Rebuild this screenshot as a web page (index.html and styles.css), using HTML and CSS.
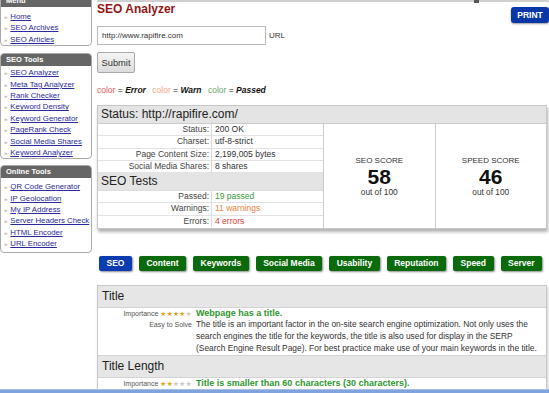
FILE: index.html
```html
<!DOCTYPE html>
<html lang="en">
<head>
    <meta charset="UTF-8">
    <meta name="viewport" content="width=device-width, initial-scale=1.0">
    <title>SEO Analyzer</title>
    <link rel="stylesheet" href="styles.css">
</head>

<body>
    <div class="page">
        <!-- levý panel s menu -->
        <aside class="sidebar">
            <div class="box box-menu">
                <div class="box-head">Menu</div>
                <ul>
                    <li><a href="#">Home</a></li>
                    <li><a href="#">SEO Archives</a></li>
                    <li><a href="#">SEO Articles</a></li>
                </ul>
            </div>
            <div class="box">
                <div class="box-head">SEO Tools</div>
                <ul>
                    <li><a href="#">SEO Analyzer</a></li>
                    <li><a href="#">Meta Tag Analyzer</a></li>
                    <li><a href="#">Rank Checker</a></li>
                    <li><a href="#">Keyword Density</a></li>
                    <li><a href="#">Keyword Generator</a></li>
                    <li><a href="#">PageRank Check</a></li>
                    <li><a href="#">Social Media Shares</a></li>
                    <li><a href="#">Keyword Analyzer</a></li>
                </ul>
            </div>
            <div class="box box-last">
                <div class="box-head">Online Tools</div>
                <ul>
                    <li><a href="#">QR Code Generator</a></li>
                    <li><a href="#">IP Geolocation</a></li>
                    <li><a href="#">My IP Address</a></li>
                    <li><a href="#">Server Headers Check</a></li>
                    <li><a href="#">HTML Encoder</a></li>
                    <li><a href="#">URL Encoder</a></li>
                </ul>
            </div>
        </aside>

        <main class="content">
            <div class="topbar"><span class="topbar-icon"></span></div>

            <div class="head-row">
                <h1>SEO Analyzer</h1>
                <button class="print">PRINT</button>
            </div>

            <!-- formulář pro URL -->
            <form class="url-form">
                <div class="url-row">
                    <input type="text" value="http://www.rapifire.com" class="url-input">
                    <span class="url-label">URL</span>
                </div>
                <button type="button" class="submit">Submit</button>
            </form>

            <p class="legend">
                <span class="c-error">color</span> = <b><i>Error</i></b>
                <span class="c-warn">color</span> = <b><i>Warn</i></b>
                <span class="c-pass">color</span> = <b><i>Passed</i></b>
            </p>

            <!-- přehled stavu -->
            <div class="status-panel">
                <div class="panel-head">Status: http://rapifire.com/</div>
                <div class="status-body">
                    <div class="status-table">
                        <div class="row"><span class="label">Status:</span><span class="value">200 OK</span></div>
                        <div class="row"><span class="label">Charset:</span><span class="value">utf-8-strict</span></div>
                        <div class="row"><span class="label">Page Content Size:</span><span class="value">2,199,005 bytes</span></div>
                        <div class="row"><span class="label">Social Media Shares:</span><span class="value">8 shares</span></div>
                        <div class="sub-head">SEO Tests</div>
                        <div class="row"><span class="label">Passed:</span><span class="value c-pass-text">19 passed</span></div>
                        <div class="row"><span class="label">Warnings:</span><span class="value c-warn-text">11 warnings</span></div>
                        <div class="row row-last"><span class="label">Errors:</span><span class="value c-error-text">4 errors</span></div>
                    </div>
                    <div class="score">
                        <div class="score-name">SEO SCORE</div>
                        <div class="score-num">58</div>
                        <div class="score-out">out of 100</div>
                    </div>
                    <div class="score">
                        <div class="score-name">SPEED SCORE</div>
                        <div class="score-num">46</div>
                        <div class="score-out">out of 100</div>
                    </div>
                </div>
            </div>

            <!-- záložky -->
            <nav class="tabs">
                <a href="#" class="tab active">SEO</a>
                <a href="#" class="tab">Content</a>
                <a href="#" class="tab">Keywords</a>
                <a href="#" class="tab">Social Media</a>
                <a href="#" class="tab">Usability</a>
                <a href="#" class="tab">Reputation</a>
                <a href="#" class="tab">Speed</a>
                <a href="#" class="tab">Server</a>
            </nav>

            <!-- výsledky testů -->
            <div class="check-panel">
                <div class="check-head">Title</div>
                <div class="check-row">
                    <div class="check-meta">
                        <div class="importance">Importance <span class="stars"><span class="on">★★★★</span>★</span></div>
                        <div class="solve">Easy to Solve</div>
                    </div>
                    <div class="check-text">
                        <div class="check-title">Webpage has a title.</div>
                        <p>The title is an important factor in the on-site search engine optimization. Not only uses the search engines the title for the keywords, the title is also used for display in the SERP (Search Engine Result Page). For best practice make use of your main keywords in the title.</p>
                    </div>
                </div>
                <div class="check-head">Title Length</div>
                <div class="check-row">
                    <div class="check-meta">
                        <div class="importance">Importance <span class="stars"><span class="on">★★</span>★★★</span></div>
                    </div>
                    <div class="check-text">
                        <div class="check-title">Title is smaller than 60 characters (30 characters).</div>
                    </div>
                </div>
            </div>
        </main>
    </div>
    <div class="window-edge"></div>
</body>
</html>
```

FILE: styles.css
```css
/* Stylování */
body {
    font-family: "Liberation Sans", Arial, sans-serif;
    background-color: #fff;
    color: #333;
    margin: 0;
    padding: 0;
    overflow: hidden;
}

.page {
    display: flex;
    align-items: flex-start;
}

/* levý panel */
.sidebar {
    width: 92px;
    flex-shrink: 0;
    margin-top: -6px;
}

.box {
    border: 1px solid #aaa;
    border-radius: 4px;
    margin-bottom: 6px;
    background-color: #fff;
}

.box-head {
    background-color: #666;
    color: #fff;
    font-weight: bold;
    font-size: 7.5px;
    height: 12px;
    line-height: 12px;
    padding-left: 5px;
    border-radius: 3px 3px 0 0;
}

.box ul {
    list-style: none;
    margin: 0;
    padding: 1px 0 0 3px;
}

.box-menu {
    margin-bottom: 7px;
}

.box-menu ul {
    padding-top: 4px;
}

.box-last ul {
    padding-top: 3px;
    padding-bottom: 2px;
}

.box li {
    font-size: 7.8px;
    line-height: 11.4px;
    height: 11.4px;
    white-space: nowrap;
}

.box li::before {
    content: "»";
    color: #999;
    font-size: 6px;
    line-height: 0;
    margin-right: 3px;
}

.box a {
    color: #2a2a9c;
    text-decoration: underline;
}

/* hlavní obsah */
.content {
    flex: 1;
    margin-left: 5px;
    min-width: 0;
}

.topbar {
    height: 2px;
    background-color: #cfcfcf;
}

.topbar-icon {
    display: block;
    width: 5px;
    height: 3px;
    background-color: #555;
    margin-left: 377px;
}

.head-row {
    display: flex;
    justify-content: space-between;
    align-items: flex-start;
}

h1 {
    margin: 0;
    font-size: 12px;
    line-height: 14px;
    color: #951515;
}

.print {
    margin-top: 5px;
    height: 16px;
    width: 38px;
    padding: 0;
    border: none;
    border-radius: 3px;
    background-color: #0a37a8;
    color: #fff;
    font-family: inherit;
    font-weight: bold;
    font-size: 8.5px;
    box-shadow: 0 1px 2px rgba(0, 0, 0, 0.4);
}

.url-row {
    display: flex;
    align-items: center;
    margin-top: 3px;
}

.url-input {
    width: 169px;
    height: 19px;
    box-sizing: border-box;
    border: 1px solid #bbb;
    padding: 0 4px;
    font-family: inherit;
    font-size: 8px;
    color: #333;
}

.url-label {
    font-size: 8px;
    margin-left: 3px;
}

.submit {
    margin-top: 7px;
    height: 21px;
    width: 38px;
    padding: 0;
    border: 1px solid #aaa;
    border-radius: 2px;
    background: linear-gradient(#f4f4f4, #dcdcdc);
    font-family: inherit;
    font-size: 9.3px;
    color: #333;
}

.legend {
    margin: 11px 0 0 0;
    font-size: 8.5px;
    line-height: 12px;
    color: #111;
}

.c-error { color: #e35b5b; }
.c-warn { color: #f3a47f; }
.c-pass { color: #6da56d; }
.legend .c-warn, .legend .c-pass { margin-left: 4px; }

/* panel se stavem */
.status-panel {
    margin: 9px 2px 0 0;
    border: 1px solid #c8c8c8;
    box-shadow: 1px 3px 3px rgba(0, 0, 0, 0.3);
}

.panel-head {
    background-color: #e4e4e4;
    font-size: 12px;
    height: 17px;
    line-height: 17px;
    padding-left: 3px;
    border-bottom: 1px solid #ccc;
    color: #222;
}

.status-body {
    display: flex;
}

.status-table {
    width: 225px;
    border-right: 1px solid #ccc;
    font-size: 8.5px;
}

.row {
    display: flex;
    line-height: 11.3px;
    border-bottom: 1px solid #e2e2e2;
}

.row-last {
    border-bottom: none;
    padding-bottom: 1px;
}

.label {
    width: 111px;
    text-align: right;
    padding-right: 2px;
    border-right: 1px solid #ddd;
    color: #444;
}

.value {
    padding-left: 3px;
}

.c-pass-text { color: #3b9a3b; }
.c-warn-text { color: #f08040; }
.c-error-text { color: #e03c3c; }

.sub-head {
    background-color: #e4e4e4;
    font-size: 12px;
    height: 17px;
    line-height: 17px;
    padding-left: 3px;
    color: #222;
    border-bottom: 1px solid #ddd;
}

.score {
    flex: 1;
    display: flex;
    flex-direction: column;
    justify-content: center;
    align-items: center;
    text-align: center;
}

.score + .score {
    border-left: 1px solid #ccc;
}

.score-name {
    font-size: 8px;
    line-height: 11px;
    color: #333;
}

.score-num {
    font-size: 21px;
    font-weight: bold;
    line-height: 21px;
    color: #111;
}

.score-out {
    font-size: 8.3px;
    line-height: 11px;
    color: #333;
}

/* záložky */
.tabs {
    display: flex;
    gap: 7px;
    margin: 27px 0 0 2px;
}

.tab {
    height: 15px;
    line-height: 15px;
    padding: 0 7.5px;
    background-color: #0b6a0b;
    color: #fff;
    font-size: 8.5px;
    font-weight: bold;
    text-decoration: none;
    border-radius: 2px;
    box-shadow: 1px 1px 2px rgba(0, 0, 0, 0.45);
}

.tab.active {
    background-color: #0b3bb0;
}

/* panel s testy */
.check-panel {
    margin: 14px 2px 0 0;
    border: 1px solid #c8c8c8;
    box-shadow: 1px 2px 3px rgba(0, 0, 0, 0.2);
}

.check-head {
    background-color: #e6e6e6;
    font-size: 12px;
    height: 21px;
    line-height: 21px;
    padding-left: 4px;
    color: #222;
    border-bottom: 1px solid #d4d4d4;
}

.check-row + .check-head {
    border-top: 1px solid #d4d4d4;
}

.check-row {
    display: flex;
    padding: 1px 3px 1px 0;
}

.check-meta {
    width: 94px;
    flex-shrink: 0;
    text-align: right;
    color: #555;
}

.importance {
    font-size: 7px;
    line-height: 9px;
}

.stars {
    font-family: "DejaVu Sans", sans-serif;
    font-size: 6.5px;
    letter-spacing: 0.5px;
    color: #c8c8c8;
}

.stars .on {
    color: #d9a520;
}

.solve {
    font-size: 7px;
    line-height: 12px;
}

.check-text {
    margin-left: 4px;
}

.check-title {
    font-size: 9px;
    font-weight: bold;
    line-height: 9px;
    color: #2f962f;
}

.check-text p {
    margin: 0;
    font-size: 8.4px;
    line-height: 12px;
    color: #333;
}

.window-edge {
    position: fixed;
    left: 0;
    right: 0;
    bottom: 0;
    height: 3px;
    background-color: #7fa3dc;
    border-top: 1px solid #a9c0e6;
}
```
